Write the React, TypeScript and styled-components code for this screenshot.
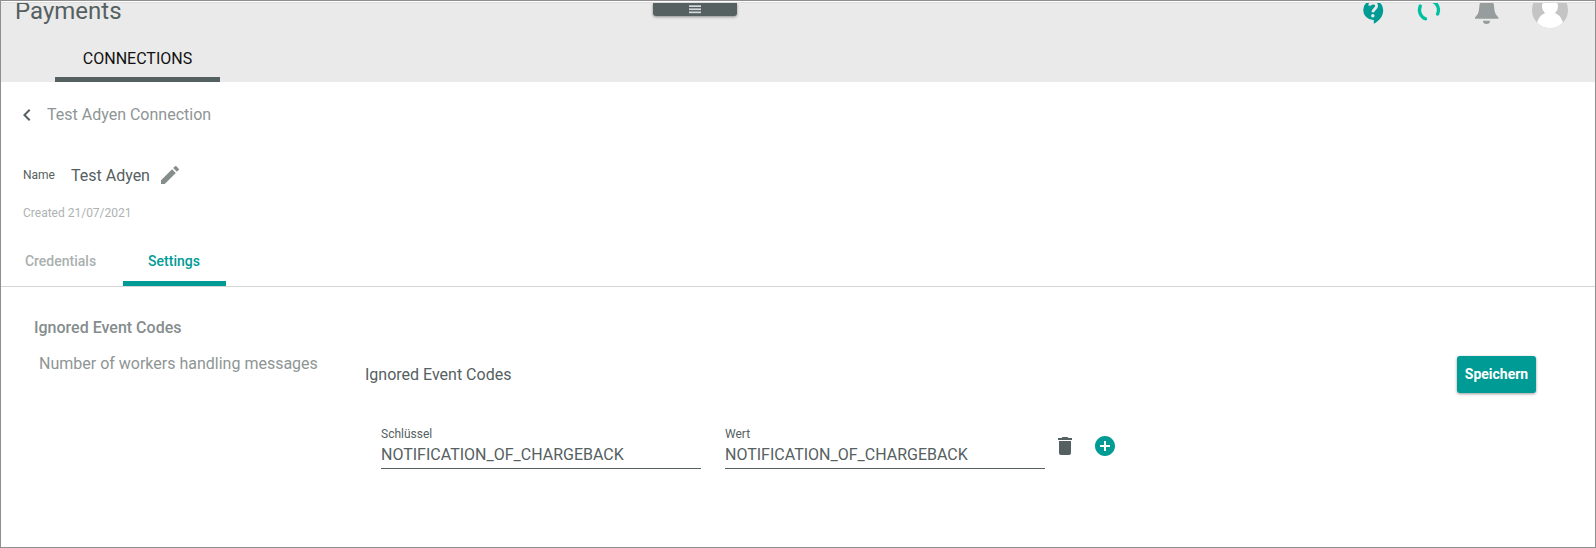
import React from "react";
import styled, { createGlobalStyle } from "styled-components";
import { MdEdit, MdDelete, MdAddCircle, MdChevronLeft } from "react-icons/md";

const teal = "#009b94";
const slate = "#556061";

const GlobalStyle = createGlobalStyle`
  * { box-sizing: border-box; }
  body { margin: 0; font-family: Roboto, sans-serif; color: ${slate}; background: #fff; }
  svg { display: block; flex: none; }
`;

const Frame = styled.div`
  width: 1596px;
  height: 548px;
  border: 1px solid #8f8f8f;
  padding-top: 1px;
  overflow: hidden;
`;

const Header = styled.header`
  position: relative;
  height: 80px;
  border-top: 1px solid #dedede;
  background: #eaeaea;
  display: flex;
  flex-direction: column;
  justify-content: space-between;
  overflow: hidden;
`;

const TopBar = styled.div`
  display: flex;
  justify-content: space-between;
  height: 34px;
  margin-top: -8px;
  padding: 0 27px 0 14px;
`;

const Title = styled.h1`
  margin: 2px 0 0;
  font-size: 24px;
  font-weight: 400;
  line-height: 28px;
`;

const HeaderIcons = styled.div`
  display: flex;
`;

const IconSlot = styled.div<{ $gap?: number; $top?: number }>`
  margin-left: ${(p) => p.$gap ?? 0}px;
  margin-top: ${(p) => p.$top ?? 0}px;
`;

const PullTab = styled.div`
  position: absolute;
  top: 0;
  left: 652px;
  width: 84px;
  height: 13px;
  border-radius: 0 0 3px 3px;
  background: ${slate};
  box-shadow: 0 1px 3px rgba(0, 0, 0, 0.4);
  display: flex;
  justify-content: center;
  align-items: center;
`;

const MainTab = styled.div`
  align-self: flex-start;
  margin-left: 54px;
  width: 165px;
  height: 35px;
  padding-top: 2px;
  border-bottom: 5px solid ${slate};
  color: #111;
  font-size: 16px;
  line-height: 20px;
  text-align: center;
`;

const Breadcrumb = styled.div`
  display: flex;
  align-items: center;
  height: 24px;
  margin-top: 21px;
  padding-left: 14px;
  gap: 8px;
`;

const Muted = styled.span`
  font-size: 16px;
  line-height: 20px;
  color: #8e9595;
`;

const NameRow = styled.div`
  display: flex;
  align-items: center;
  height: 24px;
  margin-top: 36px;
  padding-left: 22px;
`;

const Small = styled.span`
  font-size: 12px;
  line-height: 16px;
`;

const NameValue = styled.span`
  margin: 2px 8px 0 16px;
  font-size: 16px;
  line-height: 20px;
`;

const Created = styled.div`
  margin-top: 18px;
  padding-left: 22px;
  font-size: 12px;
  line-height: 16px;
  color: #aeb2b2;
`;

const Tabs = styled.nav`
  display: flex;
  height: 37px;
  margin-top: 29px;
  border-bottom: 1px solid #d4d5d5;
`;

const Tab = styled.div<{ $active?: boolean; $width: number }>`
  width: ${(p) => p.$width}px;
  height: 36px;
  padding-right: ${(p) => (p.$active ? 1 : 3)}px;
  border-bottom: 5px solid ${(p) => (p.$active ? teal : "transparent")};
  color: ${(p) => (p.$active ? teal : "#aaafaf")};
  font-size: 14px;
  font-weight: 500;
  line-height: 22px;
  text-align: center;
`;

const SectionTitle = styled.h2`
  margin: 31px 0 0 33px;
  font-size: 16px;
  font-weight: 500;
  line-height: 20px;
  color: #858d8d;
`;

const Section = styled.section`
  display: flex;
  margin-top: 16px;
  padding-left: 38px;
`;

const Description = styled.div`
  width: 326px;
`;

const Editor = styled.div`
  width: 1171px;
  margin-top: 2px;
`;

const EditorHead = styled.div`
  display: flex;
  align-items: center;
  justify-content: space-between;
  height: 37px;
  font-size: 16px;
`;

const SaveButton = styled.button`
  width: 79px;
  height: 37px;
  padding: 0 0 2px;
  border: 0;
  border-radius: 3px;
  background: ${teal};
  color: #fff;
  font: 700 14px Roboto, sans-serif;
  box-shadow: 0 1px 3px rgba(0, 0, 0, 0.4);
`;

const EntryRow = styled.div`
  display: flex;
  align-items: flex-start;
  margin-top: 33px;
  padding-left: 16px;
`;

const Field = styled.label`
  width: 320px;
  height: 43px;
  margin-right: 24px;
  border-bottom: 1px solid ${slate};
  display: flex;
  flex-direction: column;
  &:nth-of-type(2) { margin-right: 8px; }
`;

const FieldValue = styled.span`
  margin-top: 3px;
  font-size: 16px;
  line-height: 20px;
`;

const Action = styled.div<{ $color: string }>`
  margin: 8px 16px 0 0;
  color: ${(p) => p.$color};
`;

const Help = () => (
  <svg width="28" height="28" viewBox="0 0 28 28">
    <path d="M13.2 2a10 10 0 0 1 10 10c0 6.3-4 11-9.4 13.8V22h-.6a10 10 0 0 1 0-20Z" fill={teal} />
    <path d="M9.6 7.6C10 4.4 16.6 4.2 16.6 8C16.6 10.8 13 11 12.9 14.2" fill="none" stroke="#eaeaea" strokeWidth="2.8" />
    <circle cx="12.8" cy="17.8" r="1.7" fill="#eaeaea" />
  </svg>
);

const Spinner = () => (
  <svg width="26" height="26" viewBox="0 0 26 26" fill="none" stroke="#00c0a2" strokeWidth="3.3" strokeLinecap="round">
    <path d="M4.3 9A9.6 9.6 0 0 0 9.5 21.8" />
    <path d="M17 4.4A9.6 9.6 0 0 1 21.6 17" />
  </svg>
);

const Bell = () => (
  <svg width="34" height="34" viewBox="0 0 34 34" fill="#969d9c">
    <path d="M5 25.7v-1.3L7.8 21Q9 19 9.3 14C9.6 8 12 6 16.7 6S23.8 8 24.1 14Q24.4 19 25.6 21L28.4 24.4v1.3Z" />
    <path d="M13 27.8h7a3.5 3.2 0 0 1-7 0Z" />
  </svg>
);

const Avatar = () => (
  <svg width="36" height="36" viewBox="0 0 36 36">
    <defs>
      <clipPath id="avatar-circle"><circle cx="18" cy="18" r="18" /></clipPath>
    </defs>
    <g clipPath="url(#avatar-circle)">
      <rect width="36" height="36" fill="#c4c4c4" />
      <circle cx="18" cy="14.5" r="8" fill="#fff" />
      <path d="M4.5 36C4.5 27 9 22 14 21h8C27 22 31.5 27 31.5 36Z" fill="#fff" />
    </g>
  </svg>
);

const MenuLines = () => (
  <svg width="12" height="9" viewBox="0 0 12 9" fill="#d5d9d9">
    <rect width="12" height="1.7" y="0.3" />
    <rect width="12" height="1.7" y="3.4" />
    <rect width="12" height="1.7" y="6.5" />
  </svg>
);

export default function App() {
  return (
    <>
      <GlobalStyle />
      <Frame>
        <Header>
          <TopBar>
            <Title>Payments</Title>
            <HeaderIcons>
              <IconSlot $top={3}><Help /></IconSlot>
              <IconSlot $gap={28} $top={2}><Spinner /></IconSlot>
              <IconSlot $gap={28} $top={-2}><Bell /></IconSlot>
              <IconSlot $gap={28} $top={-3}><Avatar /></IconSlot>
            </HeaderIcons>
          </TopBar>
          <PullTab><MenuLines /></PullTab>
          <MainTab>CONNECTIONS</MainTab>
        </Header>
        <Breadcrumb>
          <MdChevronLeft size={24} />
          <Muted>Test Adyen Connection</Muted>
        </Breadcrumb>
        <NameRow>
          <Small>Name</Small>
          <NameValue>Test Adyen</NameValue>
          <MdEdit size={24} color="#868d8d" />
        </NameRow>
        <Created>Created 21/07/2021</Created>
        <Tabs>
          <Tab $width={122}>Credentials</Tab>
          <Tab $width={103} $active>Settings</Tab>
        </Tabs>
        <SectionTitle>Ignored Event Codes</SectionTitle>
        <Section>
          <Description><Muted>Number of workers handling messages</Muted></Description>
          <Editor>
            <EditorHead>
              Ignored Event Codes
              <SaveButton>Speichern</SaveButton>
            </EditorHead>
            <EntryRow>
              <Field><Small>Schlüssel</Small><FieldValue>NOTIFICATION_OF_CHARGEBACK</FieldValue></Field>
              <Field><Small>Wert</Small><FieldValue>NOTIFICATION_OF_CHARGEBACK</FieldValue></Field>
              <Action $color={slate}><MdDelete size={24} /></Action>
              <Action $color={teal}><MdAddCircle size={24} /></Action>
            </EntryRow>
          </Editor>
        </Section>
      </Frame>
    </>
  );
}
